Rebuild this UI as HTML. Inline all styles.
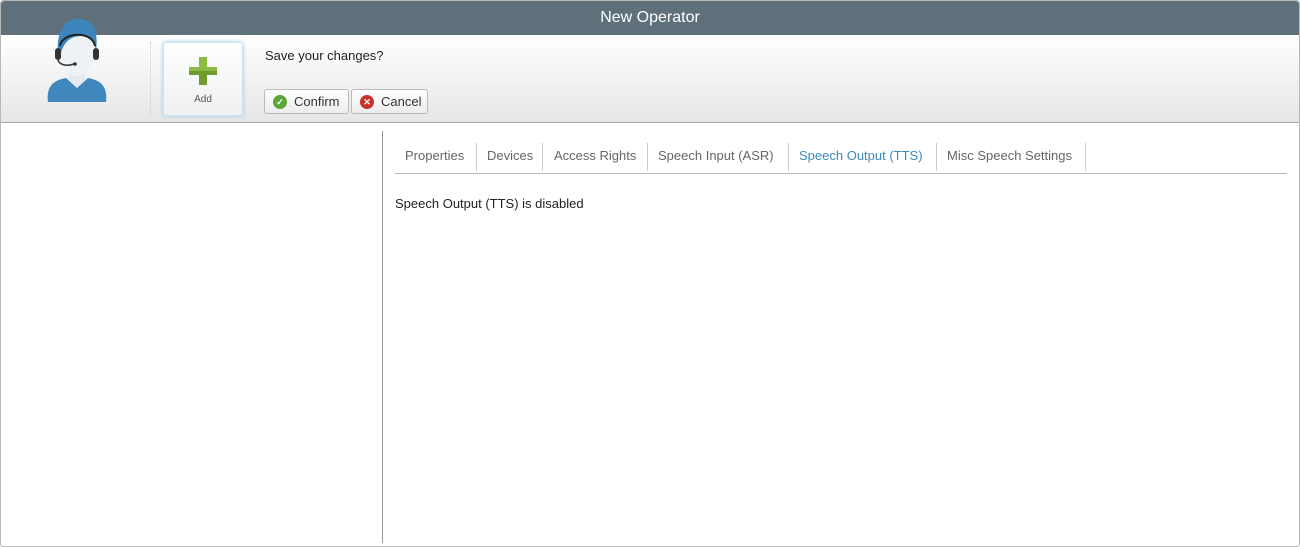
<!DOCTYPE html>
<html><head><style>
*{margin:0;padding:0;box-sizing:border-box}
body{width:1300px;height:547px;background:#fff;font-family:"Liberation Sans",sans-serif;position:relative;overflow:hidden}
.frame{position:absolute;left:0;top:0;width:1300px;height:547px;border:1px solid #b8b8b8;border-radius:3px}
.title{position:absolute;left:1px;top:1px;width:1298px;height:34px;background:#5f707b;color:#fff;font-size:16px;text-align:center;line-height:34px;border-radius:3px 3px 0 0}
.tb{position:absolute;left:1px;top:35px;width:1298px;height:88px;background:linear-gradient(#fff,#e6e6e6);border-bottom:1px solid #a9a9a9}
.sep{position:absolute;left:150px;top:42px;height:74px;border-left:1px dotted #ccc}
.add{position:absolute;left:163px;top:42px;width:80px;height:74px;background:linear-gradient(#fff,#eef0f2);border:1px solid #cfe3ee;border-radius:3px;box-shadow:0 0 4px #9cc9e3;font-size:10px;color:#555;text-align:center}
.q{position:absolute;left:265px;top:48px;font-size:13px;color:#222}
.btn{position:absolute;top:89px;height:25px;border:1px solid #bbb;border-radius:3px;background:linear-gradient(#fff,#ececec);font-size:13px;color:#333;line-height:23px;padding-left:29px}
.ic{position:absolute;left:8px;top:5px;width:14px;height:14px;border-radius:50%;color:#fff;font-size:9px;line-height:14px;text-align:center;font-weight:bold}
.vl{position:absolute;left:382px;top:131px;height:412px;border-left:1px solid #999}
.tabs{position:absolute;left:395px;top:143px;width:892px;height:31px;border-bottom:1px solid #bbb;font-size:13px;color:#666}
.tabs span{position:absolute;top:0;height:28px;line-height:26px;border-right:1px solid #ccc}
.msg{position:absolute;left:395px;top:196px;font-size:13px;color:#222}
</style></head><body>
<div class="frame"></div>
<div class="title">New Operator</div>
<div class="tb"></div>
<svg style="position:absolute;left:44px;top:16px" width="66" height="88" viewBox="0 0 66 88">
<path d="M4 86 C2 70 10 64 22 62 L33 72 L44 62 C56 64 64 70 62 86 Z" fill="#3f87bd"/>
<path d="M25 56 L25 64 L33 72 L41 64 L41 56 Z" fill="#e4eaee"/>
<ellipse cx="33" cy="38" rx="17" ry="22" fill="#eef2f5"/>
<path d="M14 38 C12 14 22 3 34 3 C48 3 55 12 52 36 C50 22 44 20 38 20 C28 20 20 24 16 40 Z" fill="#3a86bd"/>
<path d="M16 30 C18 16 48 14 51 30" stroke="#222" stroke-width="2" fill="none"/>
<rect x="11" y="32" width="6" height="12" rx="3" fill="#333"/><rect x="49" y="32" width="6" height="12" rx="3" fill="#333"/>
<path d="M14 44 C16 50 24 50 30 48" stroke="#333" stroke-width="1.5" fill="none"/><circle cx="31" cy="48" r="1.8" fill="#333"/>
</svg>
<div class="sep"></div>
<div class="add"><svg style="position:absolute;left:25px;top:14px" width="28" height="28"><path d="M10 0h8v10h10v8H18v10h-8V18H0v-8h10z" fill="#6f9c2c"/><path d="M10 0h8v10h10v4H0v-4h10z" fill="#8cbb45"/></svg><div style="position:absolute;top:51px;width:100%">Add</div></div>
<div class="q">Save your changes?</div>
<div class="btn" style="left:264px;width:85px"><span class="ic" style="background:#5aa63a">✓</span>Confirm</div>
<div class="btn" style="left:351px;width:77px"><span class="ic" style="background:#c8322d">✕</span>Cancel</div>
<div class="vl"></div>
<div class="tabs">
<span style="left:0;width:82px;padding-left:10px">Properties</span>
<span style="left:82px;width:66px;padding-left:10px">Devices</span>
<span style="left:148px;width:105px;padding-left:11px">Access Rights</span>
<span style="left:253px;width:141px;padding-left:10px">Speech Input (ASR)</span>
<span style="left:394px;width:148px;padding-left:10px;color:#3d8ab8">Speech Output (TTS)</span>
<span style="left:542px;width:149px;padding-left:10px">Misc Speech Settings</span>
</div>
<div class="msg">Speech Output (TTS) is disabled</div>
</body></html>
